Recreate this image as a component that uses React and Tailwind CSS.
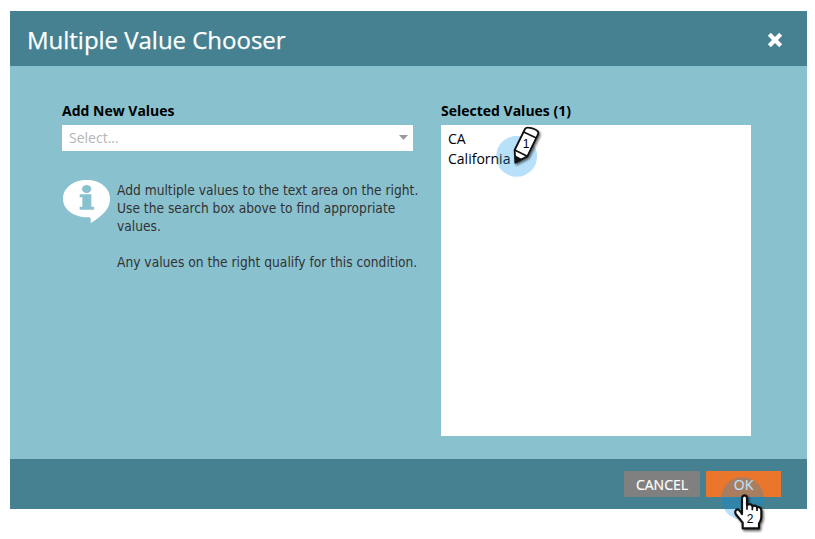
function CloseIcon() {
  return (
    <svg className="block h-4 w-4" viewBox="0 0 16 16" fill="none" stroke="#fff" strokeWidth="4.2">
      <path d="M2.3 2.3 13.7 13.7M13.7 2.3 2.3 13.7" />
    </svg>
  );
}

function InfoIcon() {
  return (
    <svg className="block h-11 w-12 shrink-0" viewBox="0 0 144 132">
      <path
        fill="#fff"
        d="M71 0C110 0 141 23 141 56C141 82 126 103 83 129C84 123 84 118 81 112C37 114 0 91 0 56C0 23 32 0 71 0Z"
      />
      <g fill="#89c1cf">
        <ellipse cx="71" cy="27" rx="14" ry="12" />
        <path d="M50 43H85V80H93V89H50V80H58V52H50Z" />
      </g>
    </svg>
  );
}

function PencilMarker() {
  return (
    <svg className="absolute top-[109px] left-[480px] h-[60px] w-[60px] overflow-visible" viewBox="0 0 180 180">
      <circle cx="80" cy="109" r="61.5" fill="#0091eb" fillOpacity="0.28" />
      <g className="drop-shadow-[4px_5px_3px_rgba(0,0,0,0.6)]">
        <path
          d="M74 90 105 27Q108 22 115 23Q135 25 144 35Q146 39 144 43L112 109 76 128Z"
          fill="#fff"
          stroke="#111"
          strokeWidth="5.5"
          strokeLinejoin="round"
        />
        <path d="M74 90 112 109M101 36 139 54" stroke="#111" strokeWidth="5" />
        <path d="M75 106 97 118 75 130Z" fill="#111" />
      </g>
      <text x="98" y="83" className="font-['Liberation_Sans',sans-serif] text-[36px]" fill="#000">
        1
      </text>
    </svg>
  );
}

function HandMarker() {
  return (
    <svg className="absolute top-[459px] left-[700px] h-[69px] w-20 overflow-visible" viewBox="0 0 240 207">
      <circle cx="97.5" cy="85" r="64" fill="#0091eb" fillOpacity="0.28" />
      <g className="drop-shadow-[4px_5px_3px_rgba(0,0,0,0.6)]">
        <path
          d="M96 132V84Q97 76 104 76Q111 77 111 85V105Q124 99 128 109Q138 104 141 112Q153 109 154 121V142Q153 153 147 160V175H98V158L77 132Q73 121 82 118Q88 118 96 132Z"
          fill="#fff"
          stroke="#111"
          strokeWidth="6.5"
          strokeLinejoin="round"
        />
        <path d="M111 101V119M127 108V121M141 112V123" stroke="#111" strokeWidth="5" />
      </g>
      <text x="110" y="159" className="font-['Liberation_Sans',sans-serif] text-[36px]" fill="#000">
        2
      </text>
    </svg>
  );
}

export default function App() {
  return (
    <div className="h-[539px] w-[815px] overflow-hidden bg-white pt-[11px] pl-[10px] font-['Open_Sans',sans-serif] text-black">
      <div className="relative flex h-[498px] w-[797px] flex-col bg-[#89c1cf]">
        <header className="flex h-[55px] shrink-0 items-center justify-between bg-[#468192] pr-6 pl-[17px]">
          <h1 className="pt-[3px] text-[24px] leading-8 tracking-[-0.02px] text-white [-webkit-text-stroke:0.25px_white]">
            Multiple Value Chooser
          </h1>
          <button aria-label="Close" className="pt-[3px]">
            <CloseIcon />
          </button>
        </header>
        <main className="flex flex-1 gap-7 pt-[35px] pl-[52px]">
          <section className="w-[351px]">
            <h2 className="h-6 text-[14px] leading-5 font-bold">Add New Values</h2>
            <div className="flex h-[26px] items-center justify-between bg-white pr-[5px] pl-[7px] text-[14px] leading-5 text-[#b5b5b5]">
              <span>Select...</span>
              <svg className="mb-0.5 h-[5px] w-[9px]" viewBox="0 0 9 5">
                <path d="M0 0H9L4.5 5Z" fill="#999" />
              </svg>
            </div>
            <div className="flex gap-[6px] pt-[29px] pl-[1px]">
              <InfoIcon />
              <div className="flex flex-col gap-[18px] pt-px font-['DejaVu_Sans_Condensed','DejaVu_Sans',sans-serif] text-[13.66px] leading-[18px] whitespace-nowrap text-[#333]">
                <p>
                  Add multiple values to the text area on the right.
                  <br />
                  Use the search box above to find appropriate
                  <br />
                  values.
                </p>
                <p>Any values on the right qualify for this condition.</p>
              </div>
            </div>
          </section>
          <section className="w-[310px]">
            <h2 className="h-6 text-[14px] leading-5 font-bold">Selected Values (1)</h2>
            <div className="h-[311px] bg-white pt-1 pl-[7px] text-[14px] leading-5">
              <p>CA</p>
              <p>California</p>
            </div>
          </section>
        </main>
        <footer className="flex h-[50px] shrink-0 items-center justify-end gap-[6px] bg-[#468192] pr-[26px] text-[14px] text-white [-webkit-text-stroke:0.2px_white]">
          <button className="h-[26px] w-[76px] bg-[#808080] pt-px leading-[26px]">CANCEL</button>
          <button className="h-[26px] w-[75px] bg-[#e9762b] pt-px leading-[26px]">OK</button>
        </footer>
        <PencilMarker />
        <HandMarker />
      </div>
    </div>
  );
}
